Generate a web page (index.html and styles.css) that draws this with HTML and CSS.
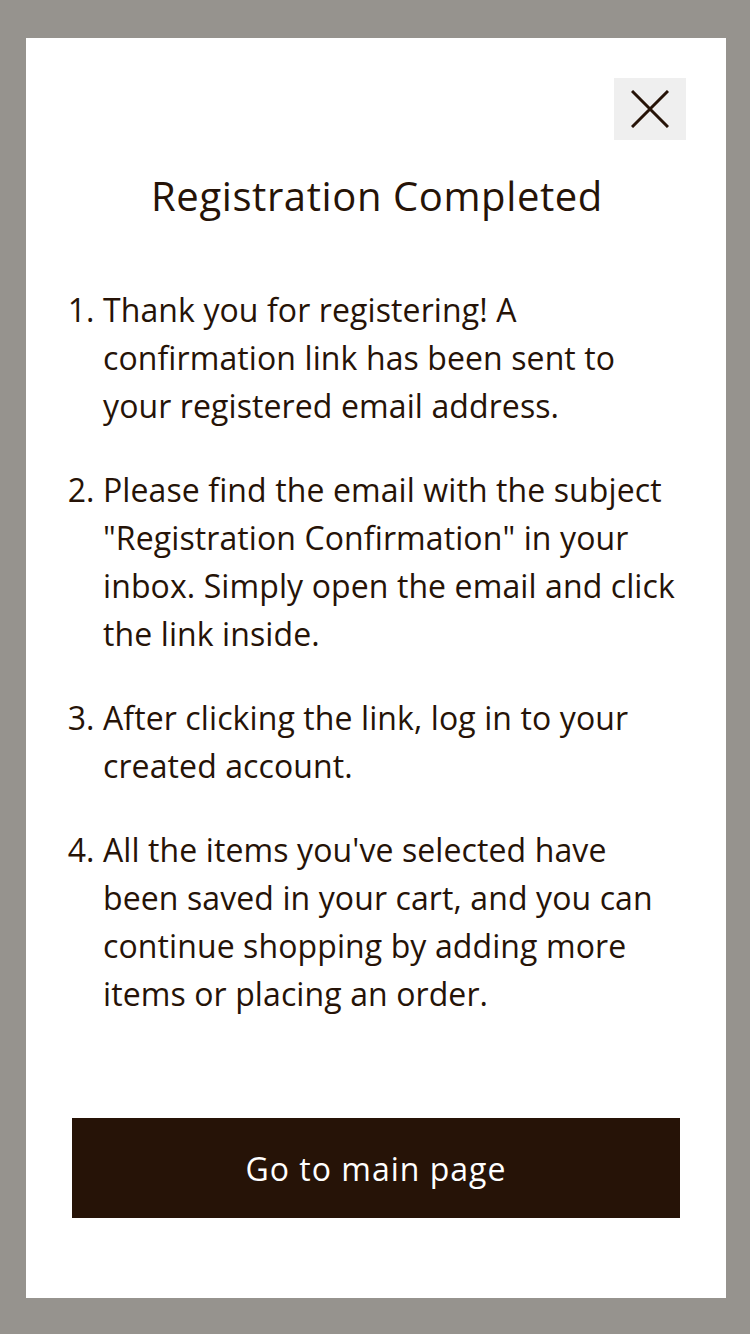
FILE: index.html
```html
<!DOCTYPE html>
<html lang="en">
<head>
<meta charset="utf-8">
<link rel="stylesheet" href="styles.css">
</head>
<body>
<div class="overlay">
  <div class="modal">
    <div class="modal-top">
      <button class="close" aria-label="Close">
        <svg width="38" height="38" viewBox="0 0 38 38"><path d="M1 1 L37 37 M37 1 L1 37" stroke="#261307" stroke-width="3" fill="none"/></svg>
      </button>
    </div>
    <h1 class="title">Registration Completed</h1>
    <ol class="steps">
      <li>Thank you for registering! A confirmation link has been sent to your registered email address.</li>
      <li>Please find the email with the subject "Registration Confirmation" in your inbox. Simply open the email and click the link inside.</li>
      <li>After clicking the link, log in to your created account.</li>
      <li>All the items you've selected have been saved in your cart, and you can continue shopping by adding more items or placing an order.</li>
    </ol>
    <button class="main-btn">Go to main page</button>
  </div>
</div>
</body>
</html>
```
FILE: styles.css
```css
html, body {
  margin: 0;
  padding: 0;
}
body {
  background: #96938e;
  font-family: "Open Sans", "Noto Sans", sans-serif;
  color: #261307;
}
.overlay {
  width: 750px;
  height: 1334px;
  box-sizing: border-box;
  padding: 38px 24px 36px 26px;
}
.modal {
  background: #fff;
  width: 700px;
  height: 1260px;
  box-sizing: border-box;
  padding: 40px 40px 0 46px;
  display: flex;
  flex-direction: column;
}
.modal-top {
  display: flex;
  justify-content: flex-end;
}
.close {
  width: 72px;
  height: 62px;
  background: #efefef;
  border: none;
  padding: 0;
  display: flex;
  align-items: center;
  justify-content: center;
  cursor: pointer;
}
.title {
  margin: 32px 0 0 0;
  padding-right: 4px;
  text-align: center;
  font-weight: 400;
  font-size: 40px;
  line-height: 48px;
  letter-spacing: 0.6px;
}
.steps {
  margin: 66px 0 0 0;
  padding: 0 0 0 31px;
  font-size: 32px;
  line-height: 48px;
  letter-spacing: 0.1px;
}
.steps li {
  margin-bottom: 36px;
}
.steps li:last-child {
  margin-bottom: 0;
}
.main-btn {
  margin-top: auto;
  margin-bottom: 80px;
  width: 608px;
  height: 100px;
  background: #261307;
  color: #fff;
  border: none;
  font-family: "Open Sans", "Noto Sans", sans-serif;
  font-size: 32px;
  letter-spacing: 1px;
}
```
